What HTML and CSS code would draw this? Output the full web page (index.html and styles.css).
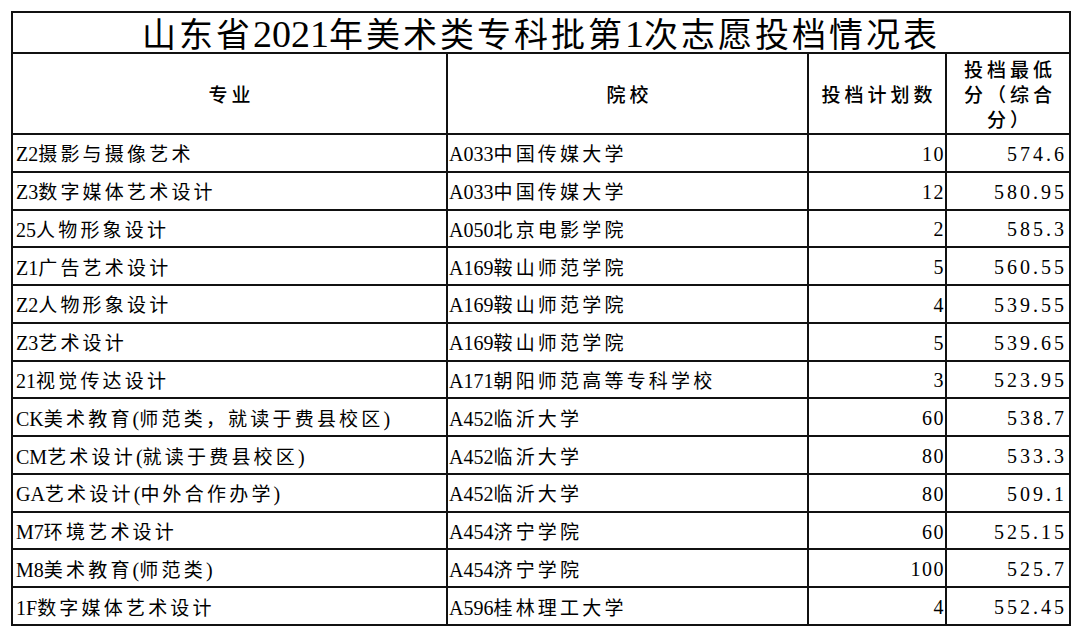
FILE: index.html
```html
<!DOCTYPE html>
<html lang="zh-CN">
<head>
<meta charset="utf-8">
<title>山东省2021年美术类专科批第1次志愿投档情况表</title>
<link rel="stylesheet" href="styles.css">
</head>
<body>
<table class="sheet">
  <colgroup>
    <col class="c-major">
    <col class="c-school">
    <col class="c-plan">
    <col class="c-score">
  </colgroup>
  <thead>
    <tr class="title-row">
      <th colspan="4">山东省<span class="lat">2021</span>年美术类专科批第<span class="lat">1</span>次志愿投档情况表</th>
    </tr>
    <tr class="head-row">
      <th>专业</th>
      <th>院校</th>
      <th>投档计划数</th>
      <th class="wrap">投档最低<br>分（综合<br>分）</th>
    </tr>
  </thead>
  <tbody>
    <tr><td><span class="lat">Z2</span>摄影与摄像艺术</td><td><span class="lat">A033</span>中国传媒大学</td><td class="num">10</td><td class="num">574.6</td></tr>
    <tr><td><span class="lat">Z3</span>数字媒体艺术设计</td><td><span class="lat">A033</span>中国传媒大学</td><td class="num">12</td><td class="num">580.95</td></tr>
    <tr><td><span class="lat">25</span>人物形象设计</td><td><span class="lat">A050</span>北京电影学院</td><td class="num">2</td><td class="num">585.3</td></tr>
    <tr><td><span class="lat">Z1</span>广告艺术设计</td><td><span class="lat">A169</span>鞍山师范学院</td><td class="num">5</td><td class="num">560.55</td></tr>
    <tr><td><span class="lat">Z2</span>人物形象设计</td><td><span class="lat">A169</span>鞍山师范学院</td><td class="num">4</td><td class="num">539.55</td></tr>
    <tr><td><span class="lat">Z3</span>艺术设计</td><td><span class="lat">A169</span>鞍山师范学院</td><td class="num">5</td><td class="num">539.65</td></tr>
    <tr><td><span class="lat">21</span>视觉传达设计</td><td><span class="lat">A171</span>朝阳师范高等专科学校</td><td class="num">3</td><td class="num">523.95</td></tr>
    <tr><td><span class="lat">CK</span>美术教育<span class="lat">(</span>师范类，就读于费县校区<span class="lat">)</span></td><td><span class="lat">A452</span>临沂大学</td><td class="num">60</td><td class="num">538.7</td></tr>
    <tr><td><span class="lat">CM</span>艺术设计<span class="lat">(</span>就读于费县校区<span class="lat">)</span></td><td><span class="lat">A452</span>临沂大学</td><td class="num">80</td><td class="num">533.3</td></tr>
    <tr><td><span class="lat">GA</span>艺术设计<span class="lat">(</span>中外合作办学<span class="lat">)</span></td><td><span class="lat">A452</span>临沂大学</td><td class="num">80</td><td class="num">509.1</td></tr>
    <tr><td><span class="lat">M7</span>环境艺术设计</td><td><span class="lat">A454</span>济宁学院</td><td class="num">60</td><td class="num">525.15</td></tr>
    <tr><td><span class="lat">M8</span>美术教育<span class="lat">(</span>师范类<span class="lat">)</span></td><td><span class="lat">A454</span>济宁学院</td><td class="num">100</td><td class="num">525.7</td></tr>
    <tr><td><span class="lat">1F</span>数字媒体艺术设计</td><td><span class="lat">A596</span>桂林理工大学</td><td class="num">4</td><td class="num">552.45</td></tr>
  </tbody>
</table>
</body>
</html>
```

FILE: styles.css
```css
html, body {
  margin: 0;
  padding: 0;
  background: #ffffff;
}

body {
  padding: 11px 0 0 11px;
  font-family: "Noto Sans CJK SC", "Liberation Serif", sans-serif;
  color: #000;
}

.sheet {
  border-collapse: collapse;
  table-layout: fixed;
  width: 1058px;
  border: 2px solid #000;
}

.c-major { width: 435px; }
.c-school { width: 361px; }
.c-plan { width: 138px; }
.c-score { width: 124px; }

.sheet th,
.sheet td {
  border: 2px solid #111;
  padding: 0;
  white-space: nowrap;
}

.lat {
  font-family: "Liberation Serif", serif;
  letter-spacing: 0;
}

.title-row th {
  height: 37px;
  font-size: 34px;
  font-weight: 400;
  letter-spacing: 3px;
  line-height: 36px;
  text-align: center;
  padding-top: 2px;
}

.title-row .lat {
  font-size: 38px;
}

.head-row th {
  height: 79px;
  font-size: 19px;
  font-weight: 500;
  letter-spacing: 4px;
  text-indent: 4px;
  text-align: center;
  vertical-align: middle;
}

.head-row th.wrap {
  white-space: normal;
  line-height: 25px;
  text-indent: 0;
  padding-left: 4px;
}

.sheet tbody td {
  height: 33.77px;
  font-size: 19px;
  letter-spacing: 3.2px;
  line-height: 24px;
  vertical-align: middle;
  padding-top: 2px;
}

.sheet tbody td:first-child {
  padding-left: 3px;
}

.sheet tbody td:nth-child(2) {
  padding-left: 1px;
}

.sheet tbody td .lat {
  font-size: 20px;
}

.sheet tbody td.num {
  font-family: "Liberation Serif", serif;
  font-size: 20px;
  letter-spacing: 3px;
  text-align: right;
  padding-right: 2px;
}

.sheet tbody td.num:nth-child(3) {
  letter-spacing: 1.5px;
  padding-right: 0;
}
```
